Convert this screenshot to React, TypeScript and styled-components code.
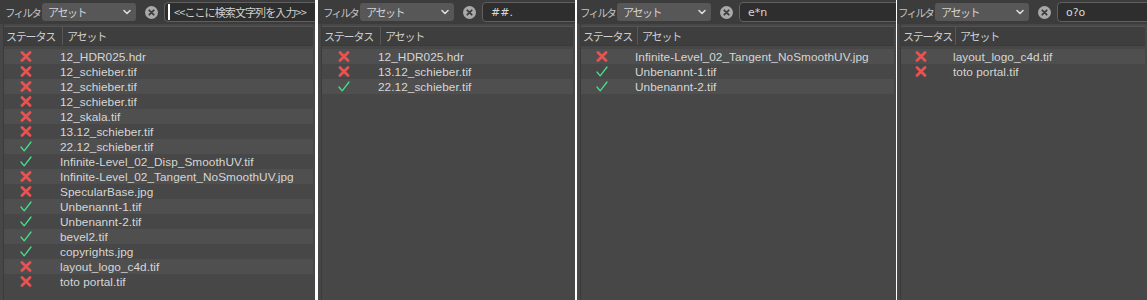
import styled, { createGlobalStyle } from 'styled-components';

const Global = createGlobalStyle`
  html, body {
    margin: 0;
    padding: 0;
    background: #ffffff;
  }
  body {
    font-family: "Liberation Sans", "Noto Sans CJK JP", sans-serif;
  }
`

const Strip = styled.div`
  display: flex;
  width: 1147px;
  height: 300px;
  overflow: hidden;
`

const Panel = styled.div<{ $width: number; $gap: number }>`
  width: ${p => p.$width}px;
  margin-right: ${p => p.$gap}px;
  height: 300px;
  flex-shrink: 0;
  background: #474747;
  display: flex;
  flex-direction: column;
  overflow: hidden;
`

const Toolbar = styled.div<{ $shift: number }>`
  height: 24px;
  display: flex;
  align-items: center;
  padding-left: ${p => 5 + p.$shift}px;
  background: #3c3c3c;
  flex-shrink: 0;
`

const Label = styled.span`
  font-family: "Noto Sans CJK JP", sans-serif;
  font-size: 10.5px;
  letter-spacing: -1.7px;
  color: #c4c4c4;
  width: 37px;
  white-space: nowrap;
  flex-shrink: 0;
`

const Select = styled.div`
  width: 94px;
  height: 18px;
  box-sizing: border-box;
  border-radius: 3px;
  background: #575757;
  display: flex;
  align-items: center;
  justify-content: space-between;
  padding: 0 5px 0 6px;
  flex-shrink: 0;
  font-family: "Noto Sans CJK JP", sans-serif;
  font-size: 11px;
  letter-spacing: -1.4px;
  color: #d2d2d2;
`

const ClearButton = styled.div`
  width: 13px;
  height: 13px;
  margin: 0 6px 0 9px;
  flex-shrink: 0;
  display: flex;
`

const Search = styled.div`
  flex: 1;
  height: 20px;
  margin-right: -6px;
  box-sizing: border-box;
  border: 1px solid #606060;
  border-radius: 4px;
  background: #2e2e2e;
  display: flex;
  align-items: center;
  padding-left: 8px;
  font-family: "DejaVu Sans", "Noto Sans CJK JP", sans-serif;
  font-size: 11px;
  color: #d8d8d8;
  white-space: nowrap;
  overflow: hidden;
`

const Placeholder = styled.span`
  font-family: "Noto Sans CJK JP", sans-serif;
  font-size: 11px;
  letter-spacing: -0.9px;
  color: #d0d0d0;
  border-left: 2px solid #ffffff;
  margin-left: -5px;
  padding-left: 4px;
`

const Body = styled.div`
  flex: 1;
  margin: 0 2px 0 3px;
  border-left: 1px solid #3a3a3a;
  display: flex;
  flex-direction: column;
`

const Header = styled.div<{ $shift: number }>`
  height: 18px;
  margin-top: 2px;
  display: grid;
  grid-template-columns: ${p => 58 + p.$shift}px 1fr;
  align-items: stretch;
  background: #3e3e3e;
  border-top: 1px solid #545454;
  border-bottom: 1px solid #3a3a3a;
`

const HeaderCell = styled.div<{ $divider?: boolean }>`
  display: flex;
  align-items: center;
  padding-left: ${p => (p.$divider ? 4 : 2)}px;
  border-left: ${p => (p.$divider ? '1px solid #575757' : 'none')};
  font-family: "Noto Sans CJK JP", sans-serif;
  font-size: 11px;
  letter-spacing: -1.2px;
  color: #cfcfcf;
  white-space: nowrap;
`

const List = styled.div`
  margin-top: 3px;
  display: flex;
  flex-direction: column;
`

const Row = styled.div<{ $shift: number }>`
  height: 15px;
  display: grid;
  grid-template-columns: ${p => 56 + p.$shift}px 1fr;
  align-items: center;
  &:nth-child(odd) {
    background: #4f4f4f;
  }
`

const StatusCell = styled.div<{ $shift: number }>`
  display: flex;
  align-items: center;
  padding-left: ${p => 16 + Math.round(p.$shift / 2)}px;
`

const NameCell = styled.div`
  font-family: "Liberation Sans", sans-serif;
  font-size: 11.8px;
  color: #d6d6d6;
  white-space: nowrap;
  letter-spacing: 0.05px;
`

function Cross() {
  return (
    <svg width="12" height="11" viewBox="0 0 12 11">
      <path d="M2 1.5 L10 9.5 M10 1.5 L2 9.5" stroke="#ea5252" strokeWidth="2.8" strokeLinecap="round" />
    </svg>
  )
}

function Check() {
  return (
    <svg width="12" height="11" viewBox="0 0 12 11">
      <path d="M1 6 L4.2 9.8 L11 1" fill="none" stroke="#46e08c" strokeWidth="1.3" strokeLinecap="round" strokeLinejoin="round" />
    </svg>
  )
}

function Chevron() {
  return (
    <svg width="8" height="6" viewBox="0 0 8 6">
      <path d="M1 1.5 L4 4.5 L7 1.5" fill="none" stroke="#dcdcdc" strokeWidth="1.6" strokeLinecap="round" strokeLinejoin="round" />
    </svg>
  )
}

function ClearIcon() {
  return (
    <svg width="13" height="13" viewBox="0 0 13 13">
      <circle cx="6.5" cy="6.5" r="6.5" fill="#a9a9a9" />
      <path d="M4.3 4.3 L8.7 8.7 M8.7 4.3 L4.3 8.7" stroke="#3c3c3c" strokeWidth="1.8" strokeLinecap="round" />
    </svg>
  )
}

type Asset = { ok: boolean; name: string }

interface FilterPanelProps {
  width: number
  gap: number
  shift: number
  query?: string
  assets: Asset[]
}

function FilterPanel({ width, gap, shift, query, assets }: FilterPanelProps) {
  return (
    <Panel $width={width} $gap={gap}>
      <Toolbar $shift={shift}>
        <Label>フィルタ</Label>
        <Select>
          <span>アセット</span>
          <Chevron />
        </Select>
        <ClearButton>
          <ClearIcon />
        </ClearButton>
        <Search>
          {query ? query : <Placeholder>{'<<ここに検索文字列を入力>>'}</Placeholder>}
        </Search>
      </Toolbar>
      <Body>
        <Header $shift={shift}>
          <HeaderCell>ステータス</HeaderCell>
          <HeaderCell $divider>アセット</HeaderCell>
        </Header>
        <List>
          {assets.map((a, i) => (
            <Row key={i} $shift={shift}>
              <StatusCell $shift={shift}>{a.ok ? <Check /> : <Cross />}</StatusCell>
              <NameCell>{a.name}</NameCell>
            </Row>
          ))}
        </List>
      </Body>
    </Panel>
  )
}

const all: Asset[] = [
  { ok: false, name: '12_HDR025.hdr' },
  { ok: false, name: '12_schieber.tif' },
  { ok: false, name: '12_schieber.tif' },
  { ok: false, name: '12_schieber.tif' },
  { ok: false, name: '12_skala.tif' },
  { ok: false, name: '13.12_schieber.tif' },
  { ok: true, name: '22.12_schieber.tif' },
  { ok: true, name: 'Infinite-Level_02_Disp_SmoothUV.tif' },
  { ok: false, name: 'Infinite-Level_02_Tangent_NoSmoothUV.jpg' },
  { ok: false, name: 'SpecularBase.jpg' },
  { ok: true, name: 'Unbenannt-1.tif' },
  { ok: true, name: 'Unbenannt-2.tif' },
  { ok: true, name: 'bevel2.tif' },
  { ok: true, name: 'copyrights.jpg' },
  { ok: false, name: 'layout_logo_c4d.tif' },
  { ok: false, name: 'toto portal.tif' },
]

const pick = (...idx: number[]) => idx.map(i => all[i])

export default function App() {
  return (
    <>
      <Global />
      <Strip>
        <FilterPanel width={315} gap={3} shift={0} assets={all} />
        <FilterPanel width={257} gap={2} shift={0} query="##." assets={pick(0, 5, 6)} />
        <FilterPanel width={319} gap={1} shift={-2} query="e*n" assets={pick(8, 10, 11)} />
        <FilterPanel width={250} gap={0} shift={-4} query="o?o" assets={pick(14, 15)} />
      </Strip>
    </>
  )
}
